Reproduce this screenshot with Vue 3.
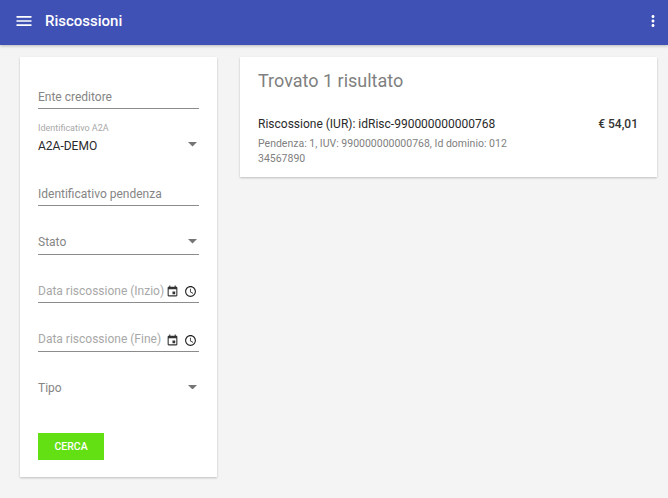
<template>
  <div class="page">
    <header class="toolbar">
      <svg class="menu-icon" viewBox="0 0 24 24" width="20" height="20">
        <path d="M3 18h18v-2H3v2zm0-5h18v-2H3v2zm0-7v2h18V6H3z" fill="#fff" />
      </svg>
      <div class="title">Riscossioni</div>
      <svg class="more-icon" viewBox="0 0 24 24" width="18" height="18">
        <path d="M12 8c1.1 0 2-.9 2-2s-.9-2-2-2-2 .9-2 2 .9 2 2 2zm0 2c-1.1 0-2 .9-2 2s.9 2 2 2 2-.9 2-2-.9-2-2-2zm0 6c-1.1 0-2 .9-2 2s.9 2 2 2 2-.9 2-2-.9-2-2-2z" fill="#fff" />
      </svg>
    </header>

    <main class="content">
      <aside class="card filters">
        <div
          v-for="field in fields"
          :key="field.label"
          :class="['field', { 'no-line': field.noLine }]"
        >
          <div v-if="field.small" class="small-label">{{ field.small }}</div>
          <span :class="field.value ? 'value' : field.light ? 'placeholder light' : 'placeholder'">{{ field.label }}</span>
          <svg v-if="field.select" class="caret" viewBox="0 0 10 5" width="9" height="4.5">
            <path d="M0 0l5 5 5-5z" fill="#757575" />
          </svg>
          <template v-if="field.light">
            <svg class="pick" viewBox="0 0 24 24" width="13" height="13">
              <path d="M17 12h-5v5h5v-5zM16 1v2H8V1H6v2H5c-1.11 0-1.99.9-1.99 2L3 19c0 1.1.89 2 2 2h14c1.1 0 2-.9 2-2V5c0-1.1-.9-2-2-2h-1V1h-2zm3 18H5V8h14v11z" fill="#333" />
            </svg>
            <svg class="pick clock" viewBox="0 0 24 24" width="13" height="13">
              <path d="M11.99 2C6.47 2 2 6.48 2 12s4.47 10 9.99 10C17.52 22 22 17.52 22 12S17.52 2 11.99 2zM12 20c-4.42 0-8-3.58-8-8s3.58-8 8-8 8 3.58 8 8-3.58 8-8 8zm.5-13H11v6l5.25 3.15.75-1.23-4.5-2.67z" fill="#222" />
            </svg>
          </template>
        </div>
        <button class="search">CERCA</button>
      </aside>

      <section class="card results">
        <h2 class="heading">Trovato 1 risultato</h2>
        <div class="row">
          <div class="row-text">
            <div class="row-title">Riscossione (IUR): idRisc-990000000000768</div>
            <div class="row-sub">Pendenza: 1, IUV: 990000000000768, Id dominio: 01234567890</div>
          </div>
          <div class="amount">€ 54,01</div>
        </div>
      </section>
    </main>
  </div>
</template>

<script setup>
const fields = [
  { label: 'Ente creditore' },
  { label: 'A2A-DEMO', small: 'Identificativo A2A', value: true, select: true, noLine: true },
  { label: 'Identificativo pendenza' },
  { label: 'Stato', select: true },
  { label: 'Data riscossione (Inzio)', light: true },
  { label: 'Data riscossione (Fine)', light: true },
  { label: 'Tipo', select: true, noLine: true }
]
</script>

<style>
html, body {
  margin: 0;
  background: #f4f4f4;
}
</style>

<style scoped>
.page {
  width: 668px;
  height: 498px;
  overflow: hidden;
  background: #f4f4f4;
  font-family: Roboto, sans-serif;
}

.toolbar {
  height: 45px;
  box-sizing: border-box;
  padding: 0 6px 3px 14px;
  background: #3f51b5;
  box-shadow: 0 1px 3px rgba(0, 0, 0, 0.25);
  display: flex;
  align-items: center;
  color: #fff;
}

.title {
  flex: 1;
  margin-left: 11px;
  font-size: 15px;
  font-weight: 500;
}

.content {
  display: flex;
  align-items: flex-start;
  gap: 23px;
  padding: 12px 11px 0 20px;
}

.card {
  background: #fff;
  box-shadow: 0 1px 2px rgba(0, 0, 0, 0.22);
}

.filters {
  width: 197px;
  height: 420px;
  box-sizing: border-box;
  padding: 3.5px 18px 0;
  flex-shrink: 0;
}

.field {
  position: relative;
  box-sizing: border-box;
  height: 48.5px;
  padding-top: 23.5px;
  display: flex;
  align-items: center;
  white-space: nowrap;
  font-size: 12px;
}

.field::after {
  content: '';
  position: absolute;
  left: 0;
  right: 0;
  bottom: 0;
  height: 1px;
  background: #8c8c8c;
}

.no-line::after {
  display: none;
}

.small-label {
  position: absolute;
  left: 0;
  top: 13.5px;
  font-size: 9px;
  color: #a8a8a8;
}

.placeholder {
  color: #858585;
}

.placeholder.light {
  color: #a8a8a8;
}

.value {
  color: #2a2a2a;
  padding-top: 1px;
}

.caret {
  position: absolute;
  right: 2px;
  top: 33px;
}

.pick {
  position: absolute;
  right: 20px;
  top: 30.5px;
}

.clock {
  right: 2px;
}

.search {
  display: block;
  width: 66px;
  height: 27px;
  margin-top: 32.5px;
  border: none;
  background: #63e014;
  color: #fff;
  font-family: Roboto, sans-serif;
  font-size: 10.5px;
  font-weight: 500;
  padding: 0;
}

.results {
  width: 417px;
  height: 120px;
  box-sizing: border-box;
  padding: 0 19px 0 18px;
}

.heading {
  margin: 13px 0 0;
  font-size: 18px;
  font-weight: 400;
  color: #808080;
  line-height: 22px;
}

.row {
  display: flex;
  justify-content: space-between;
  margin-top: 24px;
}

.row-text {
  width: 250px;
}

.row-title {
  font-size: 12px;
  line-height: 16px;
  color: #2a2a2a;
  white-space: nowrap;
}

.row-sub {
  margin-top: 4px;
  font-size: 10.5px;
  line-height: 15px;
  color: #808080;
  word-break: break-all;
}

.amount {
  font-size: 12px;
  line-height: 16px;
  font-weight: 500;
  color: #333;
}
</style>
